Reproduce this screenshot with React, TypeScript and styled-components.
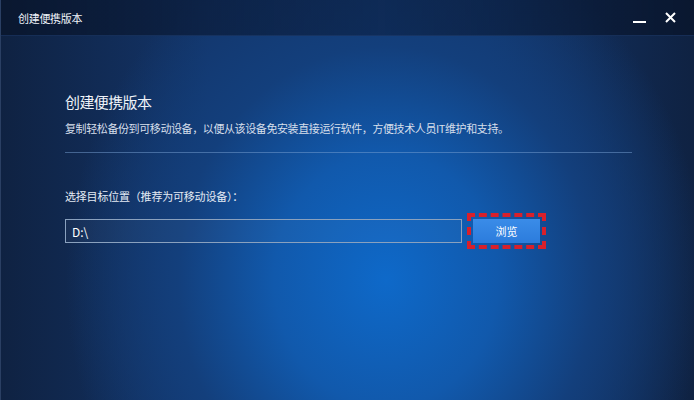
import React from "react";
import styled, { createGlobalStyle } from "styled-components";

const GlobalStyle = createGlobalStyle`
  html, body {
    margin: 0;
    padding: 0;
    width: 694px;
    height: 400px;
    overflow: hidden;
  }
  body {
    font-family: "Noto Sans CJK SC", "Noto Sans", sans-serif;
  }
`;

const Window = styled.div`
  box-sizing: border-box;
  width: 694px;
  height: 400px;
  display: flex;
  flex-direction: column;
  border-left: 1px solid #2a3f63;
  background:
    radial-gradient(ellipse 320px 360px at 385px 280px, #0e69c9 0%, #1159ac 35%, #133f7c 65%, rgba(16, 36, 70, 0) 100%),
    linear-gradient(90deg, #0f2242 0%, #13356a 30%, #13356a 70%, #0f2242 100%);
  color: #e4ebf4;
`;

const TitleBar = styled.div`
  box-sizing: border-box;
  height: 36px;
  flex-shrink: 0;
  display: flex;
  align-items: center;
  justify-content: space-between;
  padding: 0 17px 0 17px;
  background: linear-gradient(90deg, rgba(8, 20, 42, 0.75) 0%, rgba(10, 28, 60, 0.55) 55%, rgba(8, 20, 42, 0.75) 100%);
  border-bottom: 1px solid rgba(30, 60, 110, 0.6);
`;

const TitleText = styled.span`
  font-size: 11px;
  letter-spacing: -0.3px;
  line-height: 16px;
  color: #eef2f8;
`;

const Controls = styled.div`
  display: flex;
  align-items: center;
  gap: 16px;
`;

const CtrlButton = styled.button`
  width: 14px;
  height: 16px;
  padding: 0;
  border: none;
  background: transparent;
  display: flex;
  align-items: center;
  justify-content: center;
  cursor: pointer;
`;

const Content = styled.div`
  display: flex;
  flex-direction: column;
  padding: 55px 62px 0 64px;
`;

const Heading = styled.h1`
  margin: 0;
  font-size: 15px;
  letter-spacing: -0.6px;
  font-weight: 400;
  line-height: 22px;
  color: #eef2f8;
`;

const Description = styled.p`
  margin: 7px 0 0;
  font-size: 11px;
  letter-spacing: -0.4px;
  line-height: 16px;
  color: #d6dfeb;
`;

const Divider = styled.hr`
  margin: 16px 0 0;
  border: none;
  height: 1px;
  background: rgba(120, 160, 210, 0.5);
`;

const Label = styled.div`
  margin-top: 35px;
  font-size: 11px;
  letter-spacing: -0.2px;
  line-height: 16px;
  color: #e4ebf4;
`;

const Row = styled.div`
  display: flex;
  align-items: center;
  gap: 5px;
  margin-top: 9px;
`;

const PathInput = styled.input`
  box-sizing: border-box;
  width: 397px;
  height: 24px;
  padding: 0 6px;
  border: 1px solid #8aa1be;
  background: rgba(255, 255, 255, 0.03);
  color: #ffffff;
  font-family: "Noto Sans CJK SC", "Noto Sans", sans-serif;
  font-size: 12px;
  outline: none;
`;

const Highlight = styled.div`
  padding: 2px;
  border: 4px dashed #d8202b;
  display: flex;
`;

const BrowseButton = styled.button`
  width: 67px;
  height: 24px;
  border: none;
  padding: 0;
  background: linear-gradient(180deg, #3a8ce8 0%, #2c7cdc 100%);
  color: #ffffff;
  font-family: "Noto Sans CJK SC", "Noto Sans", sans-serif;
  font-size: 11px;
  cursor: pointer;
`;

export default function App() {
  return (
    <>
      <GlobalStyle />
      <Window>
        <TitleBar>
          <TitleText>创建便携版本</TitleText>
          <Controls>
            <CtrlButton aria-label="minimize">
              <svg width="14" height="14" viewBox="0 0 14 14">
                <rect x="0" y="10" width="13" height="2" fill="#ffffff" />
              </svg>
            </CtrlButton>
            <CtrlButton aria-label="close">
              <svg width="11" height="11" viewBox="0 0 11 11">
                <path d="M1 1 L10 10 M10 1 L1 10" stroke="#ffffff" strokeWidth="2" />
              </svg>
            </CtrlButton>
          </Controls>
        </TitleBar>
        <Content>
          <Heading>创建便携版本</Heading>
          <Description>
            复制轻松备份到可移动设备，以便从该设备免安装直接运行软件，方便技术人员IT维护和支持。
          </Description>
          <Divider />
          <Label>选择目标位置（推荐为可移动设备）：</Label>
          <Row>
            <PathInput defaultValue="D:\" />
            <Highlight>
              <BrowseButton>浏览</BrowseButton>
            </Highlight>
          </Row>
        </Content>
      </Window>
    </>
  );
}
